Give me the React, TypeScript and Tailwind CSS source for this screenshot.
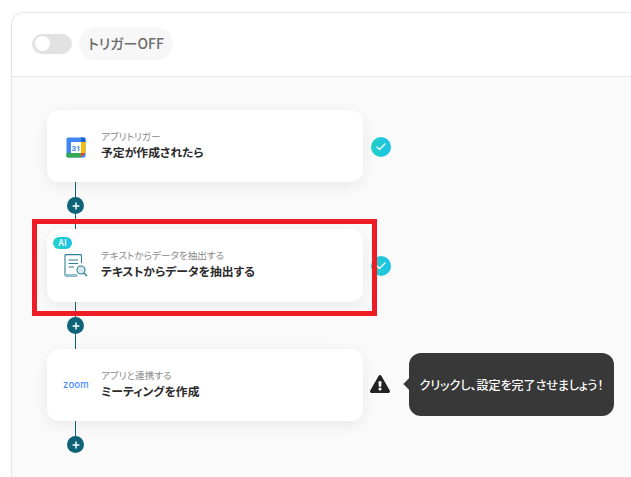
import { Check, Plus } from "lucide-react";
import { FaExclamationTriangle } from "react-icons/fa";

const font = { fontFamily: '"Noto Sans CJK JP", "Noto Sans", sans-serif', fontFeatureSettings: '"palt"' };

function CalendarIcon() {
  return (
    <svg width="20" height="21" viewBox="0 0 20 21" className="mt-[2px]">
      <rect x="0.5" y="0.5" width="19" height="20" rx="1.5" fill="#4285f4" />
      <rect x="15" y="5" width="4.5" height="11" fill="#fbbc04" />
      <path d="M0.5 16H15V20.5H2A1.5 1.5 0 0 1 0.5 19Z" fill="#34a853" />
      <path d="M15 16H19.5L15 20.5Z" fill="#ea4335" />
      <path d="M15 0.5H18A1.5 1.5 0 0 1 19.5 2V5H15Z" fill="#1967d2" />
      <rect x="5" y="5" width="10" height="11" fill="#fff" />
      <text x="10" y="13.5" textAnchor="middle" fontSize="8" fontWeight="700" fill="#4285f4" fontFamily="Roboto, sans-serif">31</text>
    </svg>
  );
}

function DocSearchIcon() {
  return (
    <svg width="24" height="24" viewBox="0 0 24 24" fill="none" stroke="#2f7f95" strokeWidth="1.1">
      <path d="M17.5 9V1.5A1 1 0 0 0 16.5 .6H2A1 1 0 0 0 1 1.5V21A1 1 0 0 0 2 22H13.5" />
      <path d="M1 18.5V21A1 1 0 0 0 2 22H13V20H3A2 2 0 0 1 1 18.5Z" fill="#8fc0cc" stroke="none" />
      <path d="M4.5 6H14M4.5 9.5H14M4.5 13H10" />
      <circle cx="17" cy="16" r="4" fill="#d8eaef" />
      <path d="M20 19L23 22" strokeWidth="1.4" />
    </svg>
  );
}

function StepCard({ label, title, icon, badge, tall }: { label: string; title: string; icon: React.ReactNode; badge?: boolean; tall?: boolean }) {
  return (
    <div className={`relative flex w-[316px] items-center rounded-xl bg-white shadow-[0_4px_16px_rgba(0,0,0,0.07)] ${tall ? "h-[73px]" : "h-[72px]"}`}>
      {badge && (
        <span className="absolute left-[6px] top-[8px] flex h-[12px] w-[19px] items-center justify-center rounded-full bg-gradient-to-r from-[#22d3c5] to-[#1fc0e8] text-[9px] font-medium text-white">
          AI
        </span>
      )}
      <div className="flex w-[54px] items-center justify-center pl-[4px]">{icon}</div>
      <div className="-mt-[4px] flex flex-col">
        <span className="text-[9.6px] leading-[14px] text-[#8a8a8a]">{label}</span>
        <span className="text-[11.8px] font-bold leading-[17px] text-[#2b2b2b]">{title}</span>
      </div>
    </div>
  );
}

function Connector({ first, last }: { first?: boolean; last?: boolean }) {
  return (
    <div className="ml-[20px] flex h-[47px] w-[17px] flex-col items-center">
      <div className={`w-px bg-[#0e6379] ${first ? "h-[16px]" : "h-[15px]"}`} />
      <div className="flex h-[17px] w-[17px] shrink-0 items-center justify-center rounded-full bg-[#0e6379]">
        <Plus size={10} strokeWidth={3.5} color="#fff" />
      </div>
      {!last && <div className="h-[15px] w-px bg-[#0e6379]" />}
    </div>
  );
}

function Done({ tall }: { tall?: boolean }) {
  return (
    <div className={`ml-[8px] flex h-[20px] w-[20px] items-center justify-center rounded-full bg-gradient-to-r from-[#22d3c5] to-[#1fc0e8] ${tall ? "mt-[1px]" : "mt-[2px]"}`}>
      <Check size={12} strokeWidth={2.5} color="#fff" />
    </div>
  );
}

export default function App() {
  return (
    <div className="relative h-[477px] w-[631px] overflow-hidden bg-white pl-[11px] pt-[12px]" style={font}>
      <div className="h-[480px] w-[640px] rounded-tl-xl border border-[#e5e5e5] bg-[#fafafa]">
        <div className="flex h-[64px] items-center gap-[7px] rounded-tl-xl border-b border-[#e5e5e5] bg-white pb-[2px] pl-[20px]">
          <div className="flex h-[20px] w-[40px] items-center rounded-full bg-[#e2e2e2] pl-[3px]">
            <div className="h-[15px] w-[15px] rounded-full bg-white" />
          </div>
          <span className="flex h-[33px] items-center rounded-full bg-[#f7f7f7] px-[9px] text-[14px] font-medium text-[#6b6b6b]">
            トリガーOFF
          </span>
        </div>
        <div className="pl-[35px] pt-[33px]">
          <div className="flex items-center">
            <StepCard label="アプリトリガー" title="予定が作成されたら" icon={<CalendarIcon />} />
            <Done />
          </div>
          <Connector first />
          <div className="flex items-center">
            <StepCard tall label="テキストからデータを抽出する" title="テキストからデータを抽出する" icon={<DocSearchIcon />} badge />
            <Done tall />
          </div>
          <Connector />
          <div className="flex items-center">
            <StepCard
              label="アプリと連携する"
              title="ミーティングを作成"
              icon={<span className="text-[9.5px] font-medium tracking-[0.2px] text-[#4a8cff]" style={{ fontFamily: "Inter, sans-serif" }}>zoom</span>}
            />
            <FaExclamationTriangle className="ml-[7px] -mt-[3px] text-[#222]" size={20} />
          </div>
          <Connector last />
        </div>
      </div>

      {/* highlight drawn over the flow */}
      <div className="absolute left-[32px] top-[219px] h-[97px] w-[345px] border-[5px] border-[#ee1c25]" />

      {/* tooltip */}
      <div className="absolute left-[409px] top-[353px] flex h-[63px] w-[205px] items-center justify-center rounded-xl bg-[#383838] text-[12px] font-medium text-white">
        <span className="absolute left-[-4px] top-[27px] h-[8px] w-[8px] rotate-45 bg-[#383838]" />
        クリックし、設定を完了させましょう！
      </div>
    </div>
  );
}
